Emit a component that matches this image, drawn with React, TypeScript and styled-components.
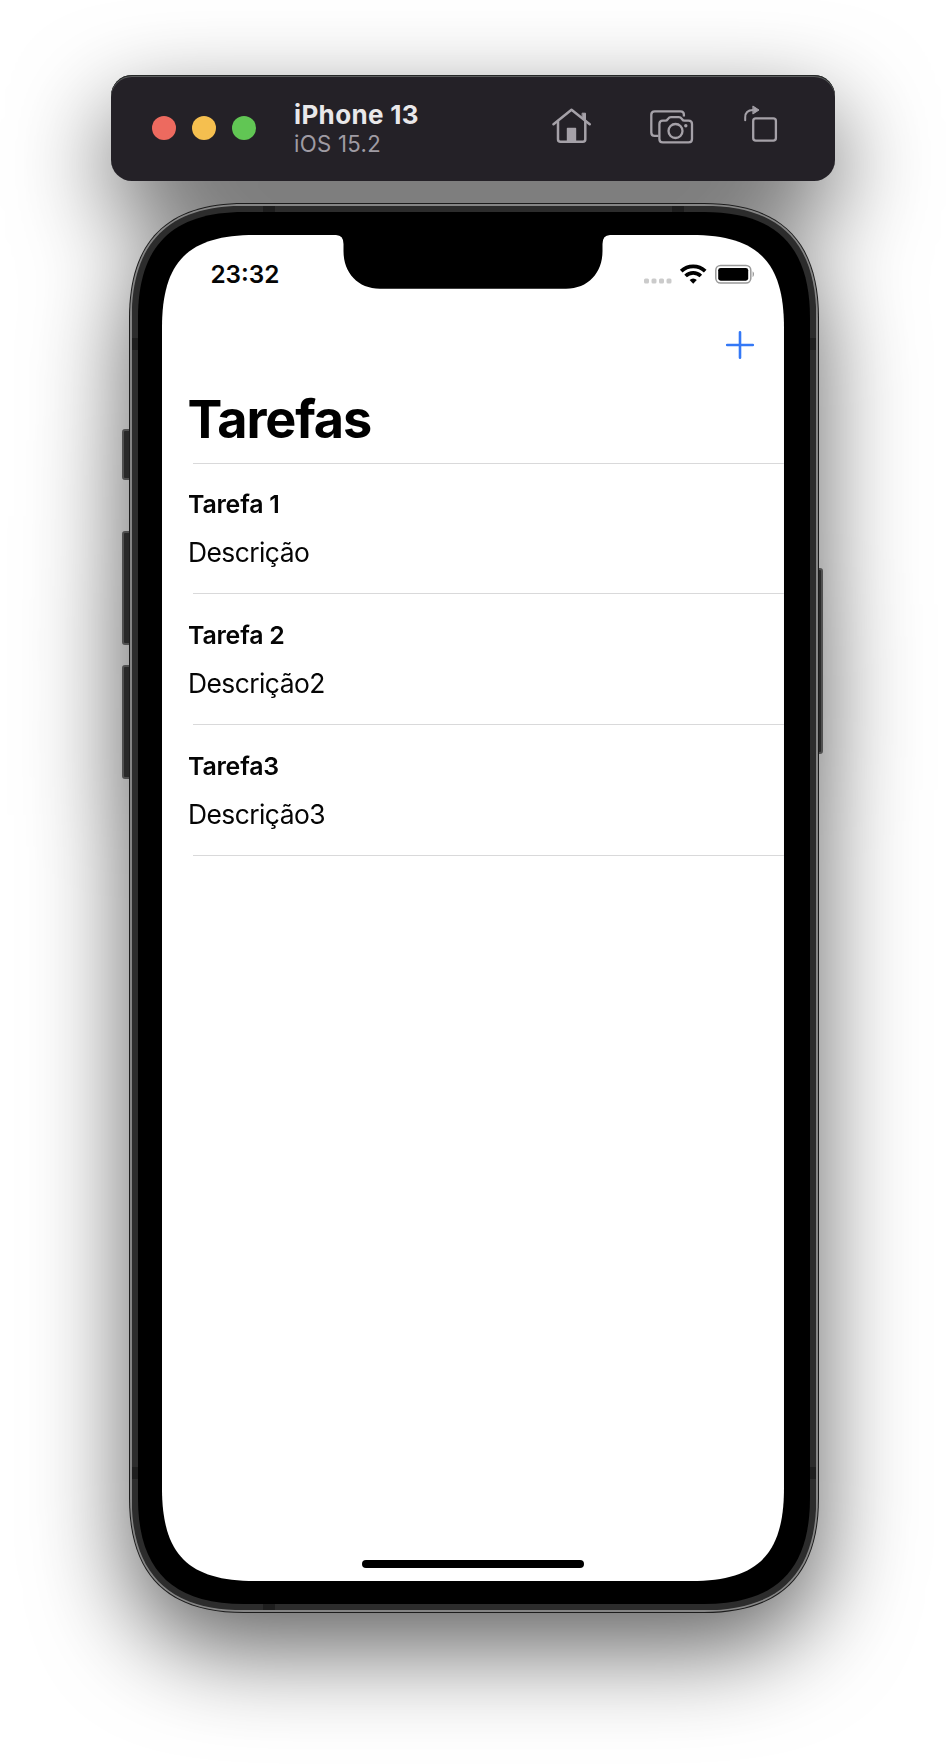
import React from "react";
import styled, { createGlobalStyle } from "styled-components";

/* Rounded rectangle with soft corners: each starts `a` px from the corner, with its handles `k` px from it. */
const softRect = (w: number, h: number, a: number, k: number) =>
  `path("M${a} 0H${w - a}C${w - k} 0 ${w} ${k} ${w} ${a}V${h - a}C${w} ${h - k} ${w - k} ${h} ${w - a} ${h}H${a}C${k} ${h} 0 ${h - k} 0 ${h - a}V${a}C0 ${k} ${k} 0 ${a} 0Z")`;

const GlobalStyle = createGlobalStyle`
  *, *::before, *::after { box-sizing: border-box; }
  body { margin: 0; background: #fff; font-family: Inter, "Liberation Sans", sans-serif; }
`;

const Page = styled.main`
  height: 1764px;
  overflow: hidden;
  padding-top: 75px;
`;

const Simulator = styled.div`
  display: flex;
  flex-direction: column;
  align-items: center;
  gap: 22px;
  filter: drop-shadow(0 36px 48px rgba(0, 0, 0, 0.62));
`;

const Toolbar = styled.header`
  width: 724px;
  height: 106px;
  display: flex;
  align-items: center;
  padding: 0 57px 0 41px;
  border-radius: 21px;
  background: #242127;
  box-shadow: inset 0 1px 0 #252827, inset 0 2px 0.5px #5c5d5e;
`;

const Lights = styled.div`
  display: flex;
  gap: 16px;
`;

const Light = styled.span<{ $color: string }>`
  width: 24px;
  height: 24px;
  border-radius: 50%;
  background: ${(p) => p.$color};
`;

const Device = styled.div`
  flex: 1;
  margin: 2px 0 0 38px;
`;

const DeviceName = styled.div`
  font-size: 26px;
  line-height: 30px;
  font-weight: 700;
  letter-spacing: 0.35px;
  color: #e9e8ea;
`;

const DeviceOs = styled.div`
  font-size: 22.2px;
  line-height: 28px;
  letter-spacing: 0.3px;
  color: #9f9ba3;
`;

const Tools = styled.div`
  display: flex;
  align-items: flex-start;
  height: 38px;
  margin-top: -9px;
  color: #a5a1a8;
  svg { display: block; }
`;

const Tool = styled.span<{ $top: number; $gap: number }>`
  padding-top: ${(p) => p.$top}px;
  margin-right: ${(p) => p.$gap}px;
`;

const Phone = styled.div`
  position: relative;
  width: 690px;
  height: 1410px;
  margin-left: 2px;
`;

const SideButton = styled.span<{ $side: "left" | "right"; $top: number; $height: number }>`
  position: absolute;
  ${(p) => p.$side}: ${(p) => (p.$side === "left" ? -7 : -4)}px;
  top: ${(p) => p.$top}px;
  width: 10px;
  height: ${(p) => p.$height}px;
  border-radius: 3px;
  border: 2px solid #505050;
  background: #292929;
`;

const Layer = styled.div<{ $w: number; $h: number; $a: number; $k: number; $color: string; $pad: string }>`
  position: relative;
  width: ${(p) => p.$w}px;
  height: ${(p) => p.$h}px;
  padding: ${(p) => p.$pad};
  background: ${(p) => p.$color};
  clip-path: ${(p) => softRect(p.$w, p.$h, p.$a, p.$k)};
`;

const Antenna = styled.span<{ $x: number; $y: number; $vertical?: boolean }>`
  position: absolute;
  left: ${(p) => p.$x}px;
  top: ${(p) => p.$y}px;
  width: ${(p) => (p.$vertical ? 6.3 : 12)}px;
  height: ${(p) => (p.$vertical ? 12 : 6.3)}px;
  background: #1e1e1e;
`;

const Screen = styled.section`
  position: relative;
  display: flex;
  flex-direction: column;
  width: 622px;
  height: 1346px;
  background: #fff;
  clip-path: ${softRect(622, 1346, 93, 26.3)};
`;

const Notch = styled.svg`
  position: absolute;
  left: 170px;
  top: 0;
`;

const StatusBar = styled.div`
  display: flex;
  justify-content: space-between;
  height: 78px;
  padding: 25px 30px 0 48.5px;
`;

const Time = styled.time`
  margin-top: 0.5px;
  font-size: 24.3px;
  line-height: 28px;
  font-weight: 600;
  color: #050505;
`;

const StatusIcons = styled.svg`
  display: block;
  margin-top: 3px;
`;

const NavBar = styled.nav`
  display: flex;
  justify-content: flex-end;
  height: 70px;
  padding: 17px 29px 0 0;
`;

const AddButton = styled.button`
  width: 30px;
  height: 30px;
  padding: 0;
  border: 0;
  background: none;
  svg { display: block; }
`;

const Title = styled.h1`
  margin: 0;
  height: 79.6px;
  padding: 4px 0 0 25.5px;
  font-size: 52.2px;
  line-height: 64px;
  font-weight: 700;
  letter-spacing: -1.15px;
  color: #000;
`;

const List = styled.ul`
  margin: 0;
  padding: 0;
  list-style: none;
`;

const Divider = styled.div`
  height: 1px;
  margin-left: 31px;
  background: #d9d9da;
`;

const Item = styled.li`
  height: 130.7px;
  padding-left: 26px;
  display: flex;
  flex-direction: column;
  color: #050505;
`;

const Rule = styled(Divider)`
  margin: auto 0 0 5px;
  flex: none;
`;

const ItemTitle = styled.strong`
  margin-top: 24.6px;
  font-size: 24.9px;
  line-height: 32px;
  font-weight: 600;
  letter-spacing: -0.2px;
`;

const ItemText = styled.span`
  margin-top: 16px;
  font-size: 26.4px;
  line-height: 32px;
  letter-spacing: -0.55px;
`;

const HomeIndicator = styled.div`
  width: 222px;
  height: 8px;
  margin: auto auto 13px;
  border-radius: 4px;
  background: #000;
`;

const HomeIcon = () => (
  <svg width="40" height="36" viewBox="0 0 40 36" fill="none" stroke="currentColor" strokeWidth="2.5" strokeLinecap="round" strokeLinejoin="round">
    <path d="M1.5 16.2 19.5 1.7 37.7 16.2" />
    <path d="M6 13.5V31.2Q6 33.7 8.5 33.7H30.8Q33.3 33.7 33.3 31.2V13.5" />
    <path d="M30.5 5.2h3v8l-3-2.4Z" fill="currentColor" strokeWidth="1" />
    <path d="M15.5 20.5h8v13h-8Z" fill="currentColor" strokeWidth="1.4" />
  </svg>
);

const CameraIcon = () => (
  <svg width="44" height="36" viewBox="0 0 44 36" fill="none" stroke="currentColor" strokeWidth="2.3" strokeLinejoin="round">
    <path d="M8.5 26.8H4.7Q1.3 26.8 1.3 23.4V5.7Q1.3 2.3 4.7 2.3H30.5Q33.9 2.3 33.9 5.7V7.5" />
    <path d="M12.8 11.7h2.5c1.5 0 2-.8 2.7-1.8.8-1.2 1.5-1.8 3-1.8h7.8c1.5 0 2.2.6 3 1.8.7 1 1.2 1.8 2.7 1.8h4Q42 11.7 42 15.1V30Q42 33.4 38.6 33.4H12.8Q9.4 33.4 9.4 30V15.1Q9.4 11.7 12.8 11.7Z" />
    <circle cx="25.5" cy="22" r="7" />
    <circle cx="35.8" cy="16.7" r="1.7" fill="currentColor" stroke="none" />
  </svg>
);

const RotateIcon = () => (
  <svg width="34" height="38" viewBox="0 0 34 38" fill="none" stroke="currentColor" strokeWidth="2.3" strokeLinecap="round">
    <rect x="9.2" y="13.3" width="22.7" height="22.4" rx="2.6" />
    <path d="M1.2 15.2V12.5Q1.2 5 9 5" strokeWidth="2" />
    <path d="M9.2 1.2 15 5 9.2 8.8Z" fill="currentColor" strokeWidth="1" strokeLinejoin="round" />
  </svg>
);

const tasks = [
  { title: "Tarefa 1", text: "Descrição" },
  { title: "Tarefa 2", text: "Descrição2" },
  { title: "Tarefa3", text: "Descrição3" },
];

export default function App() {
  return (
    <>
      <GlobalStyle />
      <Page>
        <Simulator>
          <Toolbar>
            <Lights>
              <Light $color="#ed6a5f" />
              <Light $color="#f5bf4f" />
              <Light $color="#61c654" />
            </Lights>
            <Device>
              <DeviceName>iPhone 13</DeviceName>
              <DeviceOs>iOS 15.2</DeviceOs>
            </Device>
            <Tools>
              <Tool $top={3} $gap={58}><HomeIcon /></Tool>
              <Tool $top={4} $gap={50}><CameraIcon /></Tool>
              <Tool $top={0} $gap={0}><RotateIcon /></Tool>
            </Tools>
          </Toolbar>

          <Phone>
            <SideButton $side="left" $top={226} $height={51} />
            <SideButton $side="left" $top={328} $height={114} />
            <SideButton $side="left" $top={462} $height={114} />
            <SideButton $side="right" $top={365} $height={186} />
            <Layer $w={690} $h={1410} $a={115} $k={38} $color="#1c1c1c" $pad="1px">
              <Layer $w={688} $h={1408} $a={114} $k={37.5} $color="#858585" $pad="1.7px">
                <Layer $w={684.6} $h={1404.6} $a={112.3} $k={36.8} $color="#2c2c2c" $pad="6.3px">
                  <Antenna $x={131} $y={0} />
                  <Antenna $x={540} $y={0} />
                  <Antenna $x={131} $y={1398.3} />
                  <Antenna $x={0} $y={132} $vertical />
                  <Antenna $x={678.3} $y={132} $vertical />
                  <Antenna $x={0} $y={1261} $vertical />
                  <Antenna $x={678.3} $y={1261} $vertical />
                  <Layer $w={672} $h={1392} $a={106} $k={34} $color="#000" $pad="23px 26px 23px 24px">
                    <Screen>
                      <StatusBar>
                        <Time>23:32</Time>
                        <StatusIcons width="112" height="22" viewBox="0 0 112 22">
                          <g fill="#cbcbcb">
                            <rect x="2" y="15.5" width="5" height="5" rx="1.5" />
                            <rect x="9.5" y="15.5" width="5" height="5" rx="1.5" />
                            <rect x="17" y="15.5" width="5" height="5" rx="1.5" />
                            <rect x="24.5" y="15.5" width="5" height="5" rx="1.5" />
                          </g>
                          <g fill="none" stroke="#000" strokeWidth="3.7">
                            <path d="M39.2 8.2a17.3 17.3 0 0 1 24 0" />
                            <path d="M43.6 13a10.8 10.8 0 0 1 15.2 0" />
                          </g>
                          <path d="M47.6 17.1a5 5 0 0 1 7.2 0L51.2 20.7Z" />
                          <rect x="73.8" y="2.4" width="35" height="17.7" rx="4.8" fill="none" stroke="#999" strokeWidth="1.5" />
                          <rect x="76.2" y="4.9" width="30" height="12.8" rx="2.4" />
                          <path d="M110.6 8.3q1.6 1 1.4 3 0 2-1.4 3Z" fill="#999" />
                        </StatusIcons>
                      </StatusBar>
                      <NavBar>
                        <AddButton>
                          <svg width="30" height="30" viewBox="0 0 30 30" stroke="#3478f6" strokeWidth="2.6" strokeLinecap="round">
                            <path d="M2.2 15H27.8M15 2.2V27.8" />
                          </svg>
                        </AddButton>
                      </NavBar>
                      <Title>Tarefas</Title>
                      <Divider />
                      <List>
                        {tasks.map((task) => (
                          <Item key={task.title}>
                            <ItemTitle>{task.title}</ItemTitle>
                            <ItemText>{task.text}</ItemText>
                            <Rule />
                          </Item>
                        ))}
                      </List>
                      <HomeIndicator />
                      <Notch width="282" height="54" viewBox="0 0 282 54">
                        <path d="M0 0H4Q11.5 .2 11.5 9V16C11.5 38 26 53.7 48 53.7H234C256 53.7 270.5 38 270.5 16V9Q270.5 .2 278 0H282Z" />
                      </Notch>
                    </Screen>
                  </Layer>
                </Layer>
              </Layer>
            </Layer>
          </Phone>
        </Simulator>
      </Page>
    </>
  );
}
